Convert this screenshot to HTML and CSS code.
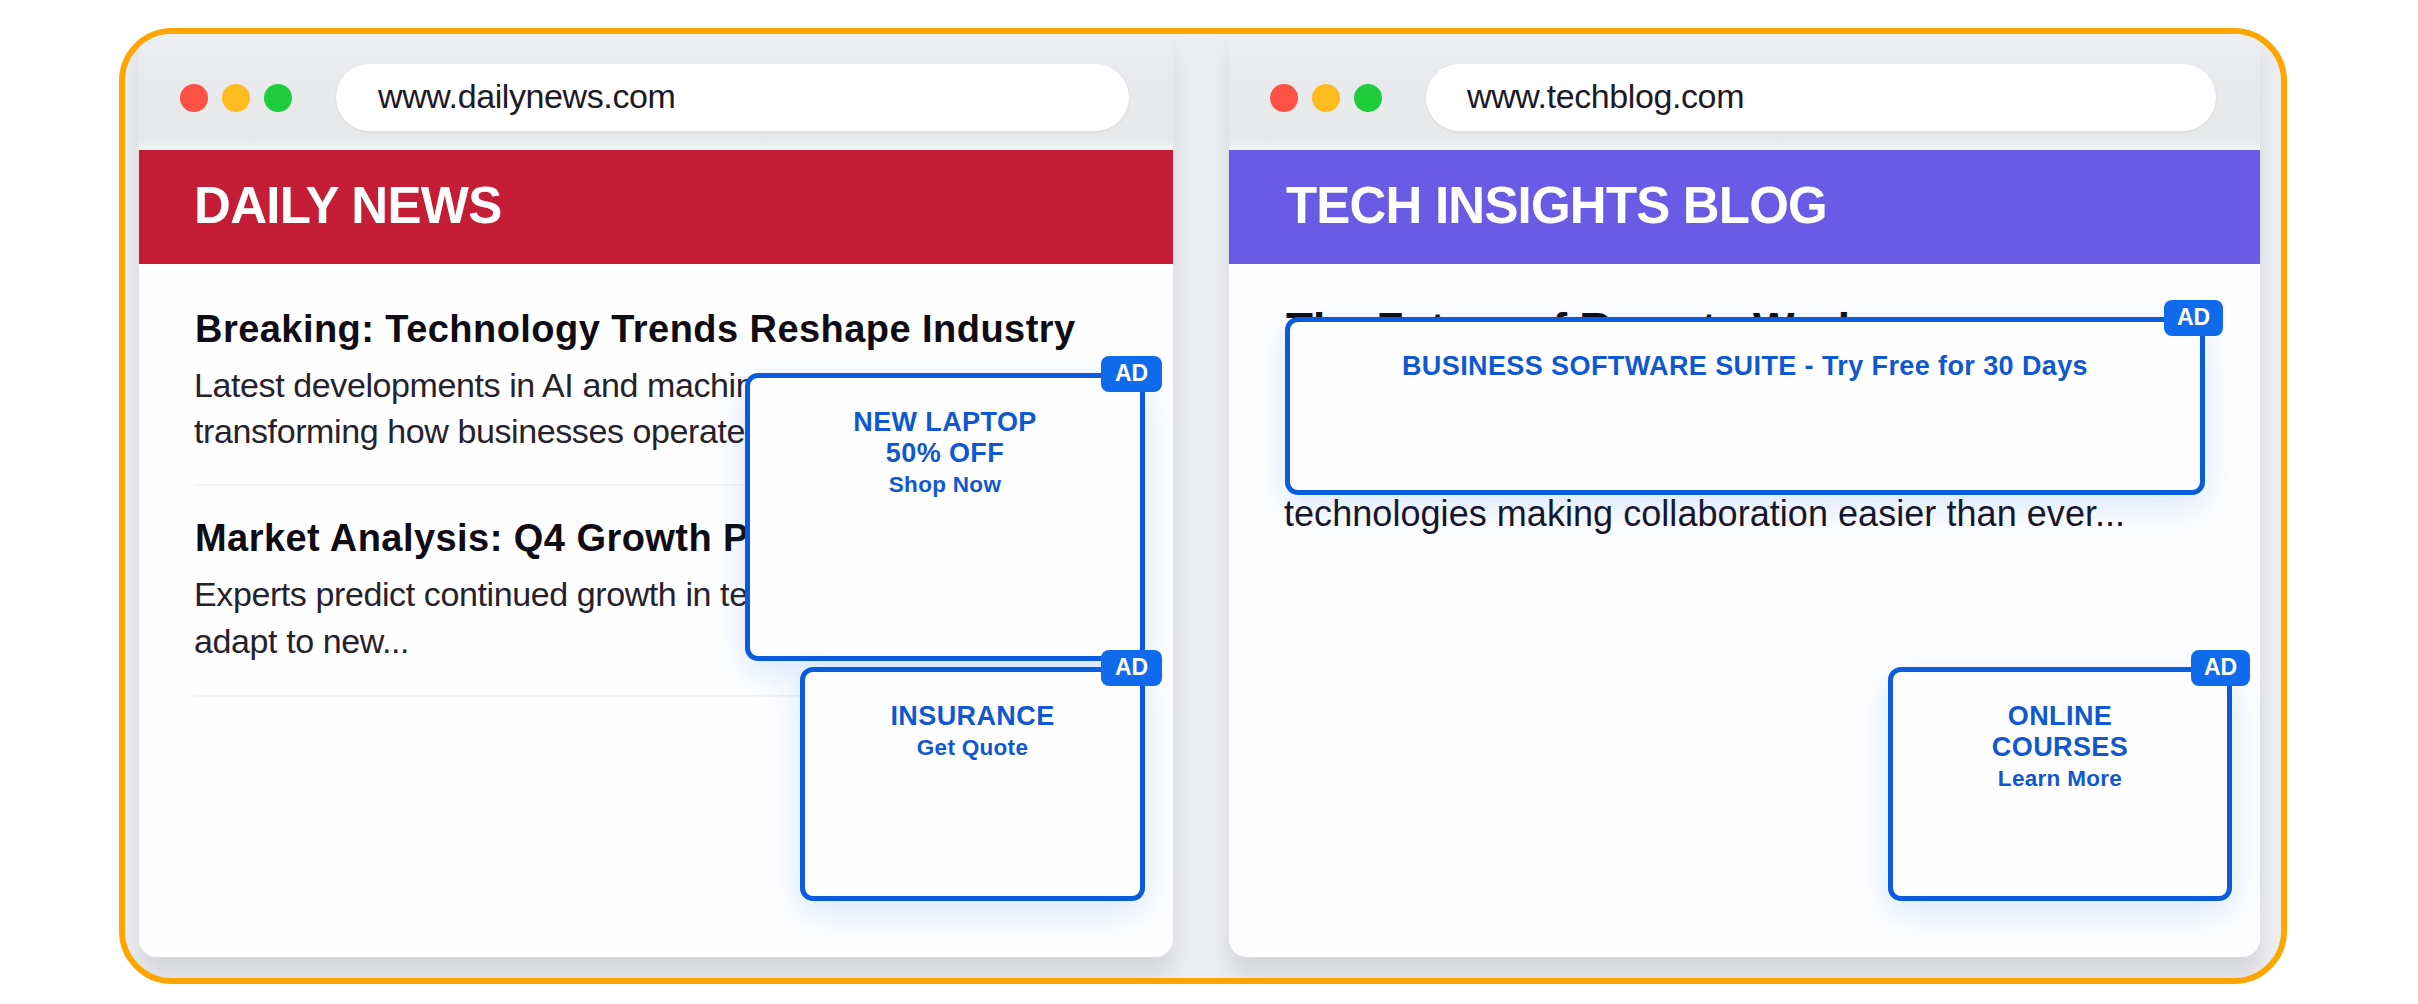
FILE: index.html
```html
<!DOCTYPE html>
<html lang="en">
<head>
    <meta charset="UTF-8">
    <meta name="viewport" content="width=device-width, initial-scale=1.0">
    <title>Daily News / Tech Insights Blog</title>
    <link rel="stylesheet" href="styles.css">
</head>
<body>
    <div class="frame">
        <div class="browser news">
            <div class="toolbar">
                <div class="dots">
                    <span class="dot red"></span>
                    <span class="dot yellow"></span>
                    <span class="dot green"></span>
                </div>
                <div class="url">www.dailynews.com</div>
            </div>
            <div class="site-title">DAILY NEWS</div>
            <div class="content">
                <div class="article">
                    <h2>Breaking: Technology Trends Reshape Industry</h2>
                    <p>Latest developments in AI and machine<br>transforming how businesses operate</p>
                </div>
                <div class="article second">
                    <h2>Market Analysis: Q4 Growth P</h2>
                    <p>Experts predict continued growth in te<br>adapt to new...</p>
                </div>
            </div>
            <div class="ad ad-laptop">
                <span class="badge">AD</span>
                <div class="wide">NEW LAPTOP</div>
                <div class="wide">50% OFF</div>
                <small>Shop Now</small>
            </div>
            <div class="ad ad-insurance">
                <span class="badge">AD</span>
                <div class="wide">INSURANCE</div>
                <small>Get Quote</small>
            </div>
        </div>

        <div class="browser blog">
            <div class="toolbar">
                <div class="dots">
                    <span class="dot red"></span>
                    <span class="dot yellow"></span>
                    <span class="dot green"></span>
                </div>
                <div class="url">www.techblog.com</div>
            </div>
            <div class="site-title">TECH INSIGHTS BLOG</div>
            <div class="content">
                <h2>The Future of Remote Work</h2>
                <p>technologies making collaboration easier than ever...</p>
            </div>
            <div class="ad ad-software">
                <span class="badge">AD</span>
                <div class="wide">BUSINESS SOFTWARE SUITE - Try Free for 30 Days</div>
            </div>
            <div class="ad ad-courses">
                <span class="badge">AD</span>
                <div class="wide">ONLINE</div>
                <div class="wide">COURSES</div>
                <small>Learn More</small>
            </div>
        </div>
    </div>
</body>
</html>
```

FILE: styles.css
```css
* {
    box-sizing: border-box;
}

body {
    margin: 0;
    background: #fff;
    font-family: "Liberation Sans", Arial, sans-serif;
    overflow: hidden;
}

.frame {
    display: flex;
    gap: 56px;
    width: 2168px;
    height: 956px;
    margin: 28px 0 0 119px;
    padding: 0 21px 21px 14px;
    border: 6px solid #ffa500;
    border-radius: 53px;
    background: #ebedf1;
    overflow: hidden;
}

.browser {
    position: relative;
    width: 1034px;
    background: #fefefe;
    border-radius: 0 0 18px 18px;
    box-shadow: 0 20px 20px rgba(0, 0, 0, 0.09);
}

.blog {
    width: 1031px;
}

.toolbar {
    display: flex;
    align-items: center;
    height: 116px;
    padding: 11px 44px 0 41px;
    background: linear-gradient(#edeff3, #e8eaed 35%, #e7e9ea 92%, #f0f4f6 97%);
}

.dots {
    display: flex;
    gap: 14px;
    margin-right: 44px;
}

.dot {
    width: 28px;
    height: 28px;
    border-radius: 50%;
}

.red {
    background: #fe5146;
}

.yellow {
    background: #febb20;
}

.green {
    background: #1fcc3b;
}

.url {
    flex: 1;
    height: 67px;
    padding-left: 42px;
    border-radius: 34px;
    background: #fff;
    color: #1c1a26;
    font-size: 34px;
    line-height: 65px;
    letter-spacing: -0.4px;
    box-shadow: 0 1px 3px rgba(0, 0, 0, 0.08);
}

.blog .url {
    padding-left: 41px;
}

.site-title {
    height: 114px;
    padding-left: 55px;
    background: #c51d35;
    color: #fff;
    font-size: 51px;
    font-weight: bold;
    line-height: 112px;
    letter-spacing: -0.7px;
}

.blog .site-title {
    padding-left: 57px;
    background: #6b5ae6;
    letter-spacing: -0.8px;
}

.content {
    padding: 42px 55px 0;
    color: #100c14;
    white-space: nowrap;
}

h2 {
    margin: 0 0 10px;
    padding-left: 1px;
    font-size: 38px;
    line-height: 46px;
    letter-spacing: 0.45px;
}

p {
    margin: 0;
    color: #26222c;
    font-size: 34px;
    line-height: 46px;
    letter-spacing: -0.4px;
}

.article {
    padding-bottom: 30px;
    margin-bottom: 29px;
    border-bottom: 2px solid #f5f5f6;
}

.second p {
    line-height: 47px;
}

.blog h2 {
    padding-left: 2px;
    font-size: 44px;
    letter-spacing: 0;
    margin-bottom: 139px;
}

.blog p {
    color: #17131f;
    font-size: 36px;
    letter-spacing: 0.05px;
}

/* ads float over the page content */
.ad {
    position: absolute;
    padding: 29px 20px 0;
    border: 5px solid #0b5bdd;
    border-radius: 13px;
    background: #fefefe;
    color: #1058d0;
    font-size: 27px;
    font-weight: bold;
    line-height: 31px;
    text-align: center;
    white-space: nowrap;
    box-shadow: 0 12px 36px rgba(20, 110, 240, 0.16);
}

.ad small {
    display: block;
    font-size: 22.5px;
    letter-spacing: 0.3px;
    line-height: 32px;
}

.wide {
    letter-spacing: 0.4px;
}

.badge {
    position: absolute;
    top: -22px;
    right: -22px;
    width: 61px;
    height: 36px;
    border-radius: 8px;
    background: #106bec;
    color: #fff;
    font-size: 23px;
    line-height: 35px;
}

.blog .badge {
    right: -23px;
    width: 59px;
}

.ad-laptop {
    top: 339px;
    left: 606px;
    width: 400px;
    height: 288px;
}

.ad-insurance {
    top: 633px;
    left: 661px;
    width: 345px;
    height: 234px;
}

.ad-software {
    top: 283px;
    left: 56px;
    width: 920px;
    height: 178px;
}

.ad-courses {
    top: 633px;
    left: 659px;
    width: 344px;
    height: 234px;
}
```
